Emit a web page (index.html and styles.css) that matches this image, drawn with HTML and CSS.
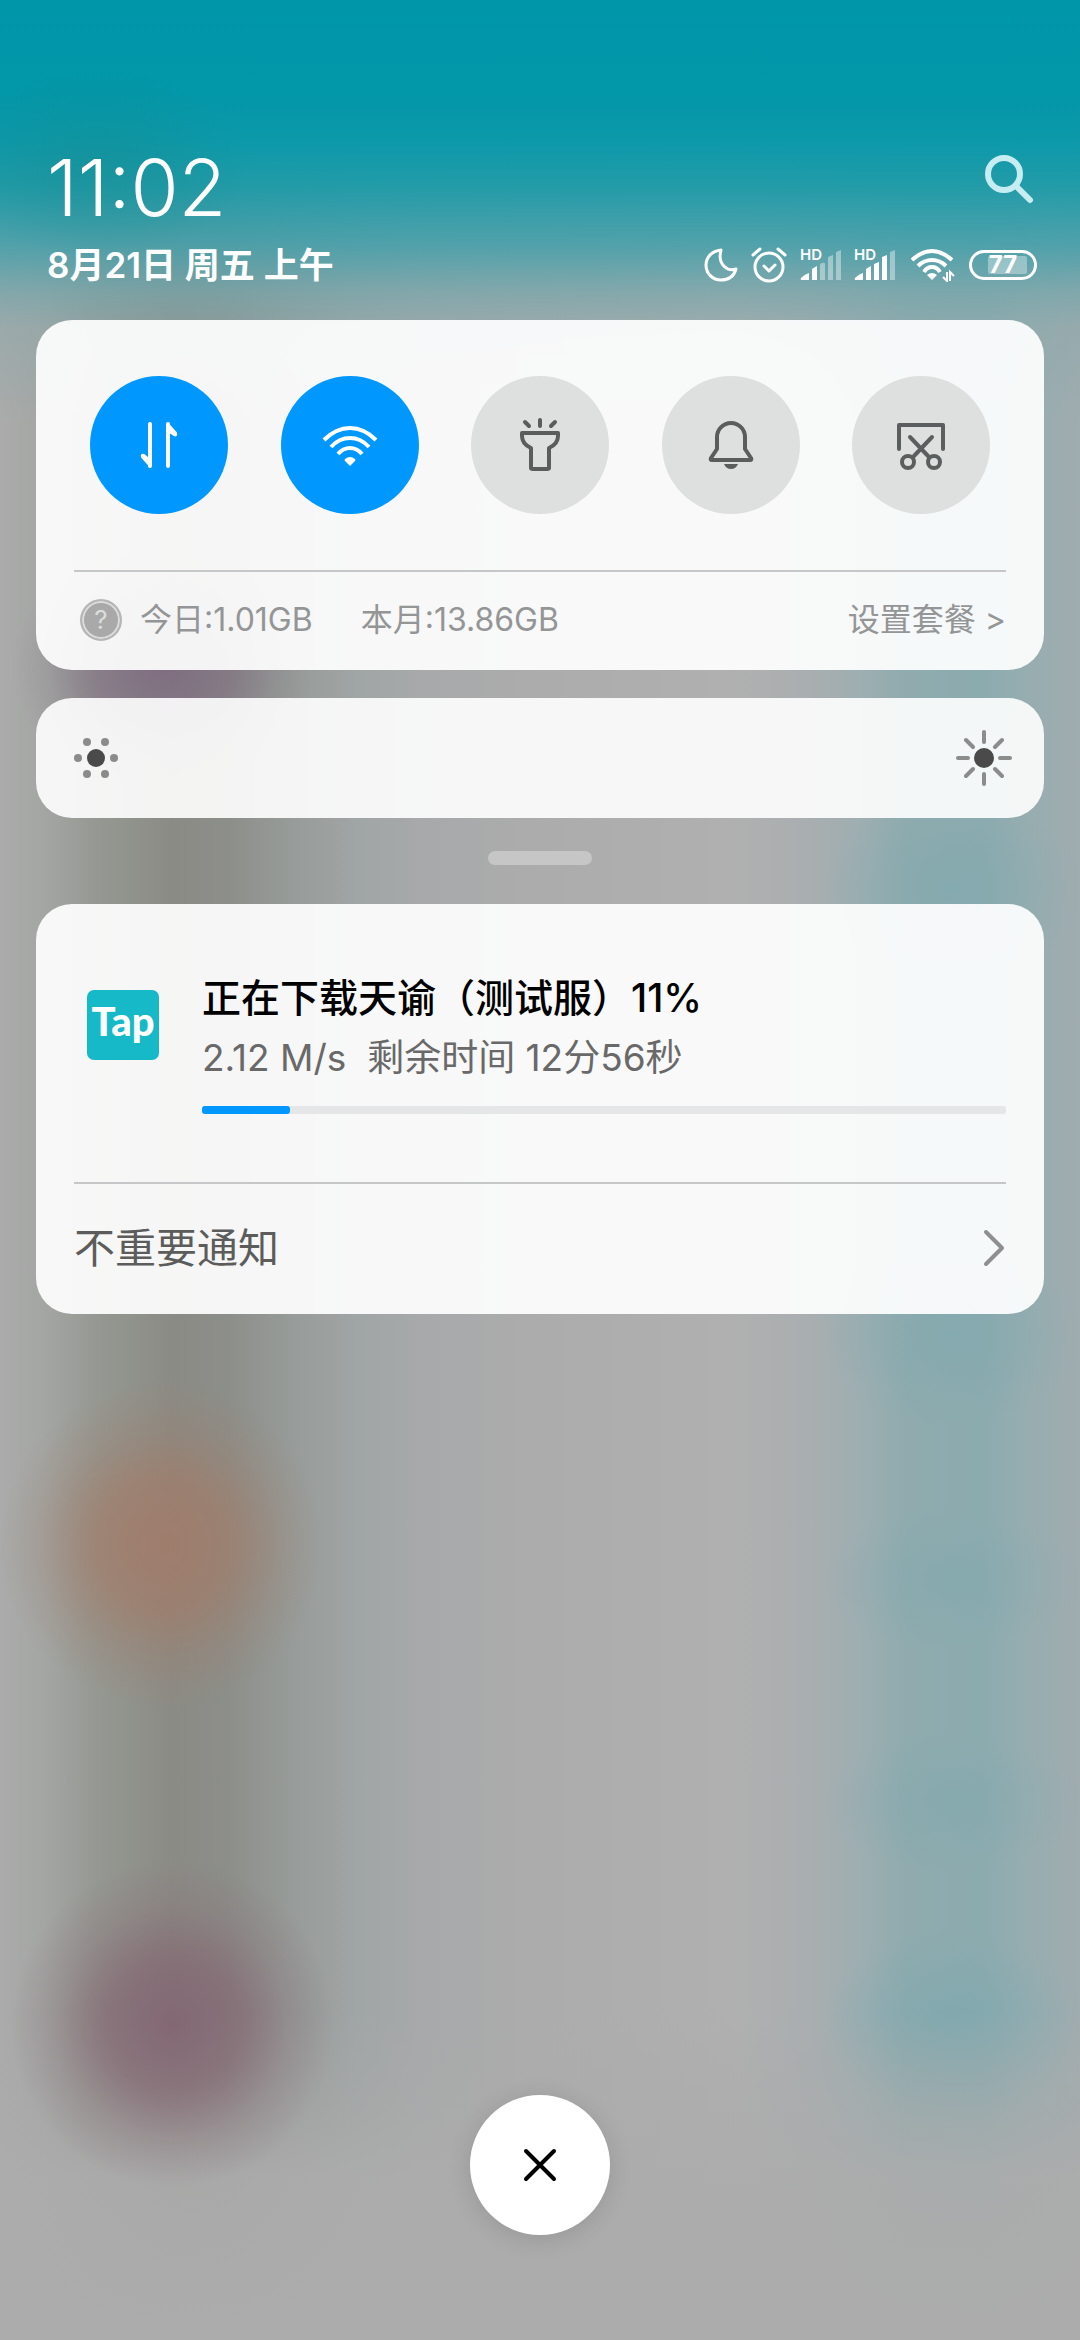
FILE: index.html
```html
<!DOCTYPE html>
<html lang="zh-CN">
<head>
<meta charset="utf-8">
<meta name="viewport" content="width=device-width, initial-scale=1">
<title>通知栏</title>
<link rel="stylesheet" href="styles.css">
</head>
<body>
<div class="shade">
  <header class="header">
    <div class="header-row">
      <time class="clock">11:02</time>
      <button class="icon-button" type="button" aria-label="搜索">
        <svg width="52" height="52" viewBox="0 0 52 52" fill="none" stroke="#c6edf1" stroke-width="6" stroke-linecap="round"><circle cx="22" cy="22" r="16"/><path d="M34 34 48 48"/></svg>
      </button>
    </div>
    <div class="header-row">
      <div class="date">8月21日 周五 上午</div>
      <div class="status">
        <svg class="moon" width="34" height="34" viewBox="0 0 34 34" fill="none" stroke="#fff" stroke-width="3" stroke-linejoin="round"><path d="M17 2C8 3 2 9 2 17c0 9 7 15 15 15 8 0 13-4 15-11-8 3-19-4-15-19z"/></svg>
        <svg class="alarm" width="36" height="36" viewBox="0 0 36 36" fill="none" stroke="#fff" stroke-width="3" stroke-linecap="round" stroke-linejoin="round"><circle cx="18" cy="20" r="14"/><path d="m13 19 5 5 6-6"/><path d="M2 8 9 2M34 8l-7-6"/></svg>
        <svg class="signal" width="42" height="44" viewBox="0 -6 42 44" fill="#fff"><text class="hd" x="0" y="11">HD</text><path d="M2 31q-2 0-1-2 4-4 8-5v7zM12 31V20q3-2 5-3v14z"/><path opacity=".4" d="M20 31V15l2-1q3-1 3 1v16zM28 31V8l5-2v25zM36 31V3l5-2v30z"/></svg>
        <svg class="signal" width="42" height="44" viewBox="0 -6 42 44" fill="#fff"><text class="hd" x="0" y="11">HD</text><path d="M2 31q-2 0-1-2 4-4 8-5v7zM12 31V20q3-2 5-3v14zM20 31V15l5-2v18zM28 31V8l5-2v25z"/><path opacity=".4" d="M36 31V3l5-2v30z"/></svg>
        <svg class="wifi" width="44" height="34" viewBox="0 0 44 34" fill="none" stroke="#fff" stroke-width="4"><path d="M1 12Q11 3 21 3t20 9M7 18q6-6 14-6t14 6M13 24q3-5 8-5t8 5"/><path fill="#fff" stroke="none" d="M16 27q5-4 10 0l-5 5z"/><path stroke-width="2" d="M36 24v9l-4-4M39 33v-9l4 4"/></svg>
        <span class="battery"><span class="battery-level"></span><span class="battery-text">77</span></span>
      </div>
    </div>
  </header>

  <section class="card settings">
    <div class="tiles">
      <button class="tile tile-on" type="button" aria-label="移动数据" aria-pressed="true">
        <svg width="56" height="56" viewBox="0 0 56 56" fill="none" stroke="#fff" stroke-width="4" stroke-linecap="round" stroke-linejoin="round"><path d="M19 7v42"/><path fill="#fff" stroke-width="2" d="m19 49-8-9q-1-3 2-2l6 5z"/><path d="M37 49V7"/><path fill="#fff" stroke-width="2" d="m37 7 8 9q1 3-2 2l-6-4z"/></svg>
      </button>
      <button class="tile tile-on" type="button" aria-label="无线网络" aria-pressed="true">
        <svg width="56" height="56" viewBox="0 0 56 56" fill="none" stroke="#fff" stroke-width="4"><path d="M2 23Q14 11 28 11t26 12M9 30q8-9 19-9t19 9M16 37q5-6 12-6t12 6"/><path fill="#fff" stroke="none" d="M23 44q-1-1 0-2 5-4 10 0 1 1 0 2l-5 5z"/></svg>
      </button>
      <button class="tile" type="button" aria-label="手电筒" aria-pressed="false">
        <svg width="56" height="56" viewBox="0 0 56 56" fill="none" stroke="#5b5c5c" stroke-width="4" stroke-linecap="round" stroke-linejoin="round"><path d="M10 16h36v3q0 8-9 12v20q0 1-2 1H21q-2 0-2-1V31q-9-4-9-12zM28 3v6M13 5l4 4M43 5l-4 4"/></svg>
      </button>
      <button class="tile" type="button" aria-label="静音" aria-pressed="false">
        <svg width="56" height="56" viewBox="0 0 56 56" fill="none" stroke="#5b5c5c" stroke-width="4" stroke-linecap="round" stroke-linejoin="round"><path d="M14 20a14 14 0 0 1 28 0v12l6 9q1 2-1 2H9q-2 0-1-2l6-9z"/><path fill="#5b5c5c" stroke="none" d="M21 47h14q-2 5-7 5t-7-5z"/></svg>
      </button>
      <button class="tile" type="button" aria-label="截屏" aria-pressed="false">
        <svg width="56" height="56" viewBox="0 0 56 56" fill="none" stroke="#5b5e5e" stroke-width="4" stroke-linecap="round" stroke-linejoin="round"><path d="M6 32V8h44v24M17 20l18 19M39 20 21 39"/><circle cx="15" cy="45" r="6"/><circle cx="41" cy="45" r="6"/></svg>
      </button>
    </div>
    <div class="usage">
      <span class="help">?</span>
      <span class="today">今日:1.01GB</span>
      <span>本月:13.86GB</span>
      <a class="plan" href="#plan">设置套餐 &gt;</a>
    </div>
  </section>

  <section class="card brightness">
    <svg width="44" height="44" viewBox="0 0 44 44" fill="#8b8b8b"><circle cx="22" cy="22" r="9" fill="#4a4a4a"/><circle cx="4" cy="22" r="4"/><circle cx="40" cy="22" r="4"/><circle cx="13" cy="6" r="4"/><circle cx="31" cy="6" r="4"/><circle cx="13" cy="38" r="4"/><circle cx="31" cy="38" r="4"/></svg>
    <input class="slider" type="range" min="0" max="100" value="0" aria-label="亮度">
    <svg width="56" height="56" viewBox="0 0 56 56" fill="none" stroke="#8b8c8c" stroke-width="4" stroke-linecap="round"><circle cx="28" cy="28" r="10" fill="#4a4a4a" stroke="none"/><path d="M28 2v10M28 44v10M2 28h10M44 28h10M10 10l7 7M39 39l7 7M10 46l7-7M39 17l7-7"/></svg>
  </section>

  <div class="handle"></div>

  <section class="card notifications">
    <article class="download">
      <div class="app-icon">Tap</div>
      <div class="download-body">
        <h2 class="title" id="download-title">正在下载天谕（测试服）11%</h2>
        <p class="detail">2.12 M/s&nbsp; 剩余时间 12分56秒</p>
        <progress class="progress" max="100" value="11" aria-labelledby="download-title"></progress>
      </div>
    </article>
    <a class="more" href="#unimportant">
      <span>不重要通知</span>
      <svg width="24" height="38" viewBox="0 0 24 38" fill="none" stroke="#8e9090" stroke-width="4" stroke-linecap="round" stroke-linejoin="round"><path d="m4 3 16 16L4 35"/></svg>
    </a>
  </section>

  <button class="close" type="button" aria-label="清除全部通知">
    <svg width="36" height="36" viewBox="0 0 36 36" fill="none" stroke="#000" stroke-width="4" stroke-linecap="round"><path d="m4 4 28 28M32 4 4 32"/></svg>
  </button>
</div>
</body>
</html>
```

FILE: styles.css
```css
* {
  box-sizing: border-box;
}

body {
  margin: 0;
  font-family: Inter, "Noto Sans CJK SC", sans-serif;
}

button {
  padding: 0;
  border: 0;
  background: none;
  font: inherit;
}

a {
  color: inherit;
  text-decoration: none;
}

svg {
  display: block;
  flex: none;
}

.shade {
  display: flex;
  flex-direction: column;
  min-height: 100vh;
  padding: 140px 36px 105px;
  background:
    radial-gradient(14% 4% at 9% 7%, rgba(20, 140, 145, .5), transparent),
    linear-gradient(#0096a9 0%, #0297a9 4%, #0c99aa 6%, rgba(30, 155, 168, .96) 8%, rgba(72, 160, 170, .9) 10.5%, rgba(118, 166, 171, .75) 12.5%, rgba(140, 168, 171, .5) 14%, transparent 18%),
    radial-gradient(14% 5% at 15% 28.5%, rgba(124, 102, 128, .8) 0%, rgba(124, 102, 128, .5) 45%, rgba(124, 102, 128, .15) 75%, transparent 100%),
    radial-gradient(15% 7% at 15% 66%, rgba(163, 122, 104, .85) 0%, rgba(162, 122, 102, .65) 40%, rgba(158, 124, 104, .25) 72%, transparent 100%),
    radial-gradient(15% 7% at 16% 86.5%, rgba(130, 100, 114, .9) 0%, rgba(131, 102, 114, .7) 40%, rgba(134, 108, 118, .3) 70%, transparent 100%),
    linear-gradient(transparent 86%, rgba(171, 171, 171, .5) 90%, rgba(172, 172, 172, .9) 93%, #acacac 100%),
    radial-gradient(12% 4% at 88% 38%, rgba(124, 168, 175, .5), transparent),
    radial-gradient(12% 4% at 88% 57%, rgba(124, 168, 175, .5), transparent),
    radial-gradient(12% 3% at 88% 67.5%, rgba(124, 168, 175, .4), transparent),
    radial-gradient(12% 3% at 88% 77%, rgba(124, 168, 175, .4), transparent),
    radial-gradient(12% 4% at 88% 86.5%, rgba(124, 168, 175, .7), transparent),
    linear-gradient(90deg, #aaabaa 0%, #a4a6a4 4%, #959892 9%, #8b8b85 16%, #8c8e89 21%, #979b99 27%, #a0a5a5 33%, #a7a9aa 39%, #acacac 50%, #b0b0b0 68%, #a9aeb0 75%, #9daeb1 80%, #8fabae 84%, #8cabaf 91%, #97adb0 95%, #a0acaf 100%);
}

.header {
  padding: 0 7px 0 11px;
}

.header-row {
  display: flex;
  align-items: center;
  justify-content: space-between;
}

.clock {
  color: #fff;
  font-size: 78px;
  font-weight: 300;
  line-height: 96px;
}

.icon-button {
  margin: 0 3px 20px 0;
}

.date {
  color: #fff;
  font-size: 35px;
  font-weight: 600;
  line-height: 58px;
}

.status {
  display: flex;
  align-items: center;
}

.moon,
.alarm {
  margin-right: 13px;
}

.signal {
  margin-right: 12px;
}

.wifi {
  margin: 0 14px 0 3px;
}

.hd {
  font-size: 15px;
  font-weight: 600;
}

.battery {
  display: grid;
  grid-template-columns: 18fr 42fr 8fr;
  align-items: center;
  width: 68px;
  height: 30px;
  border: 3px solid #fff;
  border-radius: 15px;
}

.battery-level {
  grid-area: 1 / 2;
  height: 18px;
  border-radius: 2px;
  background: rgba(255, 255, 255, .35);
}

.battery-text {
  grid-area: 1 / 1 / 2 / 4;
  color: #fff;
  font-size: 24px;
  font-weight: 700;
  line-height: 24px;
  text-align: center;
}

.card {
  border-radius: 36px;
  background: rgba(255, 255, 255, .92);
}

.settings {
  height: 350px;
  margin-top: 26px;
  padding: 56px 38px 0;
}

.tiles {
  display: flex;
  justify-content: space-between;
  padding: 0 16px 56px;
  border-bottom: 2px solid #c6c7c8;
}

.tile {
  display: grid;
  place-items: center;
  width: 138px;
  height: 138px;
  border-radius: 50%;
  background: #dedfdf;
}

.tile-on {
  background: #0098ff;
}

.usage {
  display: flex;
  align-items: center;
  height: 96px;
  padding-left: 6px;
  color: #949596;
  font-size: 32px;
  line-height: 40px;
}

.help {
  width: 42px;
  height: 42px;
  margin-right: 18px;
  border: 2px solid #b6b6b6;
  border-radius: 50%;
  background: #a9a9a9;
  box-shadow: inset 0 0 0 2px #dcdcdc;
  color: #dcdcdc;
  font-size: 26px;
  line-height: 38px;
  text-align: center;
}

.today {
  margin-right: 48px;
}

.plan {
  margin-left: auto;
}

.brightness {
  display: flex;
  align-items: center;
  height: 120px;
  margin-top: 28px;
  padding: 0 32px 0 38px;
  background: rgba(255, 255, 255, .9);
}

.slider {
  flex: 1;
  min-width: 0;
  height: 80px;
  margin: 0;
  background: transparent;
  appearance: none;
}

.slider::-webkit-slider-thumb {
  width: 1px;
  height: 80px;
  appearance: none;
}

.handle {
  align-self: center;
  width: 104px;
  height: 14px;
  margin: 33px 0 39px;
  border-radius: 7px;
  background: #c6c6c6;
}

.notifications {
  padding: 0 38px;
}

.download {
  display: flex;
  align-items: flex-start;
  padding: 64px 0 68px;
  border-bottom: 2px solid #c6c7c8;
}

.app-icon {
  width: 72px;
  height: 70px;
  margin: 22px 43px 0 13px;
  border-radius: 7px;
  background: #16b9c7;
  color: #fff;
  font-family: Lato, sans-serif;
  font-size: 40px;
  font-weight: 900;
  line-height: 62px;
  text-align: center;
}

.download-body {
  flex: 1;
  min-width: 0;
}

.title,
.detail {
  margin: 0;
  line-height: 60px;
}

.title {
  color: #000;
  font-size: 39px;
  font-weight: 500;
}

.detail {
  color: #696969;
  font-size: 37px;
}

.progress {
  display: block;
  width: 100%;
  height: 8px;
  margin-top: 18px;
  border: 0;
  appearance: none;
}

.progress::-webkit-progress-bar {
  border-radius: 3px;
  background: #e5e6e7;
}

.progress::-webkit-progress-value {
  border-radius: 3px;
  background: #0098ff;
}

.more {
  display: flex;
  align-items: center;
  justify-content: space-between;
  height: 130px;
  padding-bottom: 2px;
  color: #5c5c5c;
  font-size: 41px;
  line-height: 48px;
}

.close {
  display: grid;
  place-items: center;
  align-self: center;
  width: 140px;
  height: 140px;
  margin-top: auto;
  border-radius: 50%;
  background: #fff;
  box-shadow: 0 4px 24px rgba(0, 0, 0, .12);
}
```
